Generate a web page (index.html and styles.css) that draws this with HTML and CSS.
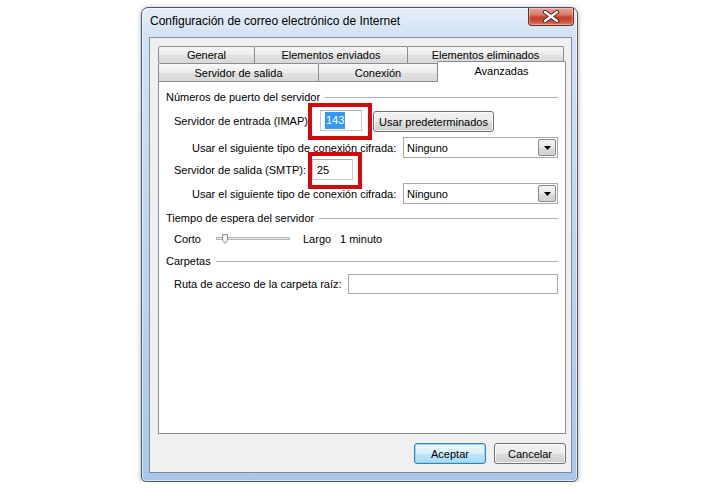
FILE: index.html
```html
<!DOCTYPE html>
<html lang="es">
<head>
<meta charset="utf-8">
<title>Configuración de correo electrónico de Internet</title>
<link rel="stylesheet" href="styles.css">
</head>
<body>
<div class="page">
  <div class="window">
    <div class="titlebar">
      <span class="title">Configuración de correo electrónico de Internet</span>
      <div class="close-btn">
        <svg width="18" height="13" viewBox="0 0 18 13">
          <path d="M3 2 L15 11 M15 2 L3 11" stroke="#5b2318" stroke-width="4.4" stroke-linecap="round" fill="none"/>
          <path d="M3 2 L15 11 M15 2 L3 11" stroke="#ffffff" stroke-width="2.4" stroke-linecap="round" fill="none"/>
        </svg>
      </div>
    </div>
    <div class="client">
      <div class="tabstrip">
        <div class="tabrow tabrow-back">
          <div class="tab tab-general">General</div>
          <div class="tab tab-sent">Elementos enviados</div>
          <div class="tab tab-deleted">Elementos eliminados</div>
        </div>
        <div class="tabrow tabrow-front">
          <div class="tab tab-outgoing">Servidor de salida</div>
          <div class="tab tab-conn">Conexión</div>
          <div class="tab tab-adv">Avanzadas</div>
        </div>
      </div>
      <div class="panel">
        <div class="group group-ports"><span>Números de puerto del servidor</span><i class="rule"></i></div>

        <div class="row row-imap">
          <span class="lbl lbl-imap">Servidor de entrada (IMAP):</span>
          <div class="field field-imap">
            <div class="textbox tb-imap"><span class="sel">143</span></div>
            <div class="mark mark-imap"></div>
          </div>
          <div class="btn btn-defaults">Usar predeterminados</div>
        </div>

        <div class="row row-enc1">
          <span class="lbl lbl-enc">Usar el siguiente tipo de conexión cifrada:</span>
          <div class="combo">
            <span>Ninguno</span>
            <div class="combo-arrow"><svg width="7" height="4" viewBox="0 0 7 4"><path d="M0 0 H7 L3.5 4 Z" fill="#000"/></svg></div>
          </div>
        </div>

        <div class="row row-smtp">
          <span class="lbl lbl-smtp">Servidor de salida (SMTP):</span>
          <div class="field field-smtp">
            <div class="textbox tb-smtp">25</div>
            <div class="mark mark-smtp"></div>
          </div>
        </div>

        <div class="row row-enc2">
          <span class="lbl lbl-enc">Usar el siguiente tipo de conexión cifrada:</span>
          <div class="combo">
            <span>Ninguno</span>
            <div class="combo-arrow"><svg width="7" height="4" viewBox="0 0 7 4"><path d="M0 0 H7 L3.5 4 Z" fill="#000"/></svg></div>
          </div>
        </div>

        <div class="group group-timeout"><span>Tiempo de espera del servidor</span><i class="rule"></i></div>

        <div class="row row-slider">
          <span class="lbl lbl-short">Corto</span>
          <svg class="slider" width="74" height="12" viewBox="0 0 74 12">
            <rect x="0.5" y="4.5" width="73" height="2" fill="#e6e8ea" stroke="#b4b6b9"/>
            <path d="M6.5 1.5 H11.5 V7.5 L9 10.5 L6.5 7.5 Z" fill="#f3f3f3" stroke="#8d8f93"/>
          </svg>
          <span class="lbl lbl-long">Largo</span>
          <span class="lbl">1 minuto</span>
        </div>

        <div class="group group-folders"><span>Carpetas</span><i class="rule"></i></div>

        <div class="row row-path">
          <span class="lbl lbl-path">Ruta de acceso de la carpeta raíz:</span>
          <div class="textbox tb-path"></div>
        </div>
      </div>
      <div class="dialog-buttons">
        <div class="btn btn-dialog btn-default">Aceptar</div>
        <div class="btn btn-dialog">Cancelar</div>
      </div>
    </div>
  </div>
</div>
</body>
</html>
```
FILE: styles.css
```css
* { box-sizing: border-box; }
html, body { margin: 0; padding: 0; background: #ffffff; }
body {
  font-family: "Liberation Sans", Arial, sans-serif;
  font-size: 11px;
  color: #000;
}
.page { padding: 7px 0 0 141px; }

.window {
  width: 437px;
  height: 475px;
  border: 1px solid #4b5868;
  border-radius: 7px 7px 5px 5px;
  background: linear-gradient(180deg, #e4eef8 0%, #d2e2f3 6%, #bed5ee 50%, #a9c7e9 100%);
  box-shadow: 0 1px 5px rgba(0,0,0,.35), inset 0 0 0 1px rgba(255,255,255,.6);
  padding: 0 5px 8px 7px;
  display: flex;
  flex-direction: column;
}
.titlebar {
  height: 29px;
  display: flex;
  justify-content: space-between;
  align-items: flex-start;
}
.title {
  font-size: 12px;
  line-height: 14px;
  margin-top: 6px;
  margin-left: 1px;
}
.close-btn {
  width: 46px;
  height: 18px;
  margin-right: -2px;
  border: 1px solid #6e2a20;
  border-top: none;
  border-radius: 0 0 4px 4px;
  background: linear-gradient(180deg, #e8a598 0%, #d97a69 40%, #c4402a 55%, #cc513a 80%, #dc7f64 100%);
  box-shadow: inset 0 0 0 1px rgba(255,255,255,.35);
  display: flex;
  align-items: center;
  justify-content: center;
}

.client {
  flex: 1;
  border: 1px solid #7b8ca3;
  background: #f0f0f0;
  padding: 8px 5px 8px 8px;
  display: flex;
  flex-direction: column;
}

.tabstrip {
  height: 35px;
  display: flex;
  flex-direction: column;
  position: relative;
  z-index: 1;
}
.tabrow { display: flex; }
.tabrow-back { height: 17px; }
.tabrow-front { height: 18px; }
.tab {
  border: 1px solid #898c95;
  border-bottom: none;
  border-radius: 2px 2px 0 0;
  background: linear-gradient(180deg, #f7f7f7 0%, #ececec 50%, #e1e1e1 51%, #d8d8d8 100%);
  display: flex;
  align-items: center;
  justify-content: center;
  white-space: nowrap;
  flex-shrink: 0;
}
.tab + .tab { margin-left: -1px; }
.tabrow-back .tab { height: 17px; padding-bottom: 1px; }
.tabrow-front .tab { height: 18px; }
.tab-general { width: 97px; }
.tab-sent { width: 154px; }
.tab-deleted { width: 157px; }
.tab-outgoing { width: 161px; }
.tab-conn { width: 120px; }
.tabrow-front .tab-adv {
  width: 129px;
  height: 21px;
  margin-top: -2px;
  background: #ffffff;
  position: relative;
  z-index: 2;
  padding-bottom: 2px;
}

.panel {
  height: 353px;
  border: 1px solid #898c95;
  background: #ffffff;
  padding: 0 7px 0 0;
  display: flex;
  flex-direction: column;
}
.group {
  height: 16px;
  display: flex;
  align-items: center;
  padding-left: 7px;
  white-space: nowrap;
}
.rule {
  flex: 1;
  height: 1px;
  background: #b2b2b2;
  margin-left: 5px;
}
.group-ports { margin-top: 7px; }
.group-timeout { margin-top: 6px; }
.group-folders { margin-top: 4px; }

.row {
  display: flex;
  align-items: center;
  padding-left: 15px;
  white-space: nowrap;
}
.row > * { flex-shrink: 0; }
.row-imap { height: 22px; margin-top: 5px; }
.row-enc1 { height: 21px; margin-top: 5px; padding-left: 33px; }
.row-smtp { height: 21px; margin-top: 1px; }
.row-enc2 { height: 21px; margin-top: 3px; padding-left: 33px; }
.row-slider { height: 20px; margin-top: 3px; }
.row-path { height: 20px; margin-top: 5px; }

.lbl-imap { width: 146px; }
.lbl-enc { width: 211px; }
.lbl-smtp { width: 138px; }
.lbl-path { width: 174px; }
.lbl-short { width: 42px; }
.lbl-long { width: 37px; }
.slider { margin-right: 13px; display: block; }

.field { position: relative; }
.field-imap { align-self: flex-start; }
.textbox {
  height: 21px;
  border: 1px solid #c6c9cf;
  border-top-color: #abadb3;
  background: #ffffff;
  display: flex;
  align-items: center;
  padding-left: 4px;
}
.tb-imap { width: 42px; }
.tb-smtp { width: 41px; }
.tb-path { width: 210px; height: 20px; border-color: #a9abb0; }
.sel {
  background: #3399ff;
  color: #ffffff;
  line-height: 17px;
  padding: 0 1px;
}
.mark {
  position: absolute;
  border: 4px solid #d20a10;
  pointer-events: none;
}
.mark-imap { left: -12px; top: -7px; right: -10px; bottom: -9px; }
.mark-smtp { left: -4px; top: -7px; right: -9px; bottom: -9px; }

.btn {
  border: 1px solid #707070;
  border-radius: 3px;
  background: linear-gradient(180deg, #f2f2f2 0%, #ebebeb 50%, #dddddd 51%, #cfcfcf 100%);
  box-shadow: inset 0 0 0 1px rgba(255,255,255,.75);
  display: flex;
  align-items: center;
  justify-content: center;
  white-space: nowrap;
}
.btn-defaults {
  width: 121px;
  height: 21px;
  margin-left: 11px;
  align-self: flex-end;
}
.combo {
  width: 155px;
  height: 21px;
  border: 1px solid #a6a8ad;
  background: #ffffff;
  display: flex;
  align-items: center;
  justify-content: space-between;
  padding-left: 3px;
}
.combo-arrow {
  width: 18px;
  height: 17px;
  margin-right: 1px;
  border: 1px solid #8a8a8a;
  border-radius: 2px;
  background: linear-gradient(180deg, #f4f4f4 0%, #e9e9e9 50%, #dcdcdc 51%, #d2d2d2 100%);
  display: flex;
  align-items: center;
  justify-content: center;
}

.dialog-buttons {
  height: 21px;
  margin-top: 9px;
  display: flex;
  justify-content: flex-end;
  gap: 8px;
}
.btn-dialog { width: 72px; height: 21px; }
.btn-default {
  border-color: #3c7fb1;
  background: linear-gradient(180deg, #eaf6fd 0%, #d9f0fc 50%, #bee6fd 51%, #a7d9f5 100%);
  box-shadow: inset 0 0 0 1px rgba(120,210,245,.8);
}
```
